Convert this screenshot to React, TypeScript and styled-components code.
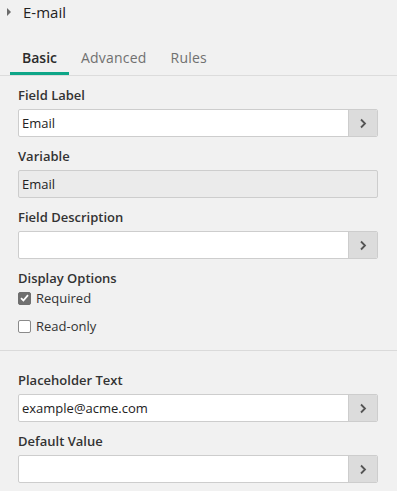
import styled, { createGlobalStyle } from "styled-components";

const GlobalStyle = createGlobalStyle`
  html, body {
    margin: 0;
    padding: 0;
    background: #f1f1f1;
    font-family: "Open Sans", "Liberation Sans", sans-serif;
    color: #333;
  }
  * {
    box-sizing: border-box;
  }
`;

const Panel = styled.div`
  width: 397px;
  min-height: 491px;
  background: #f1f1f1;
`;

const Header = styled.div`
  display: flex;
  align-items: center;
  height: 23px;
  padding: 1px 0 0 7px;
  gap: 12px;
`;

const Caret = styled.span`
  width: 0;
  height: 0;
  border-top: 4px solid transparent;
  border-bottom: 4px solid transparent;
  border-left: 4px solid #6b6b6b;
`;

const Title = styled.span`
  font-size: 15px;
  line-height: 20px;
  color: #222;
`;

const TabBar = styled.div`
  display: flex;
  margin-top: 17px;
  padding-left: 10px;
  border-bottom: 1px solid #dcdcdc;
`;

const Tab = styled.div<{ $active?: boolean }>`
  padding: 8px 12px 4px;
  font-size: 14px;
  line-height: 20px;
  font-weight: ${(p) => (p.$active ? 600 : 500)};
  letter-spacing: ${(p) => (p.$active ? "0" : "0.2px")};
  color: ${(p) => (p.$active ? "#2b2b2b" : "#707070")};
  border-bottom: 3px solid ${(p) => (p.$active ? "#0ea688" : "transparent")};
`;

const Form = styled.div<{ $top?: number }>`
  padding: ${(p) => p.$top ?? 9}px 19px 0 18px;
`;

const Field = styled.div`
  margin-bottom: 9px;
`;

const Label = styled.div`
  font-size: 13px;
  line-height: 20px;
  font-weight: 600;
  color: #333;
`;

const InputRow = styled.div<{ $readOnly?: boolean }>`
  display: flex;
  height: 28px;
  margin-top: 4px;
  border: 1px solid #cdcdcd;
  border-radius: 2px;
  overflow: hidden;
  background: ${(p) => (p.$readOnly ? "#ebebeb" : "#fff")};
`;

const TextInput = styled.input`
  flex: 1;
  min-width: 0;
  border: none;
  outline: none;
  background: transparent;
  padding: 0 3px;
  font-family: "Open Sans", "Liberation Sans", sans-serif;
  font-size: 13px;
  color: #222;
`;

const ArrowButton = styled.div`
  width: 29px;
  display: flex;
  align-items: center;
  justify-content: center;
  background: #dcdcdc;
  border-left: 1px solid #cdcdcd;
`;

const CheckList = styled.div`
  display: flex;
  flex-direction: column;
  gap: 8px;
  padding-bottom: 14px;
`;

const CheckRow = styled.label`
  display: flex;
  align-items: center;
  gap: 5px;
  height: 20px;
  font-size: 13px;
  color: #333;
`;

const Box = styled.span<{ $checked?: boolean }>`
  width: 13px;
  height: 13px;
  border-radius: 2px;
  display: flex;
  align-items: center;
  justify-content: center;
  border: 1px solid ${(p) => (p.$checked ? "#6f6f6f" : "#8a8a8a")};
  background: ${(p) => (p.$checked ? "#6f6f6f" : "#fff")};
`;

const Divider = styled.div`
  height: 1px;
  background: #dadada;
`;

function Chevron() {
  return (
    <svg width="8" height="11" viewBox="0 0 8 11">
      <path d="M2 1.5 L6 5.5 L2 9.5" fill="none" stroke="#555" strokeWidth="1.8" />
    </svg>
  );
}

function InputField({
  label,
  value = "",
  button = true,
  readOnly = false,
}: {
  label: string;
  value?: string;
  button?: boolean;
  readOnly?: boolean;
}) {
  return (
    <Field>
      <Label>{label}</Label>
      <InputRow $readOnly={readOnly}>
        <TextInput defaultValue={value} readOnly={readOnly} />
        {button && (
          <ArrowButton>
            <Chevron />
          </ArrowButton>
        )}
      </InputRow>
    </Field>
  );
}

function Checkbox({ label, checked }: { label: string; checked?: boolean }) {
  return (
    <CheckRow>
      <Box $checked={checked}>
        {checked && (
          <svg width="9" height="8" viewBox="0 0 9 8">
            <path d="M1 4.2 L3.4 6.5 L8 1.2" fill="none" stroke="#fff" strokeWidth="1.8" />
          </svg>
        )}
      </Box>
      {label}
    </CheckRow>
  );
}

export default function App() {
  return (
    <Panel>
      <GlobalStyle />
      <Header>
        <Caret />
        <Title>E-mail</Title>
      </Header>
      <TabBar>
        <Tab $active>Basic</Tab>
        <Tab>Advanced</Tab>
        <Tab>Rules</Tab>
      </TabBar>
      <Form>
        <InputField label="Field Label" value="Email" />
        <InputField label="Variable" value="Email" button={false} readOnly />
        <InputField label="Field Description" />
        <Label>Display Options</Label>
        <CheckList>
          <Checkbox label="Required" checked />
          <Checkbox label="Read-only" />
        </CheckList>
      </Form>
      <Divider />
      <Form $top={19}>
        <InputField label="Placeholder Text" value="example@acme.com" />
        <InputField label="Default Value" />
      </Form>
    </Panel>
  );
}
